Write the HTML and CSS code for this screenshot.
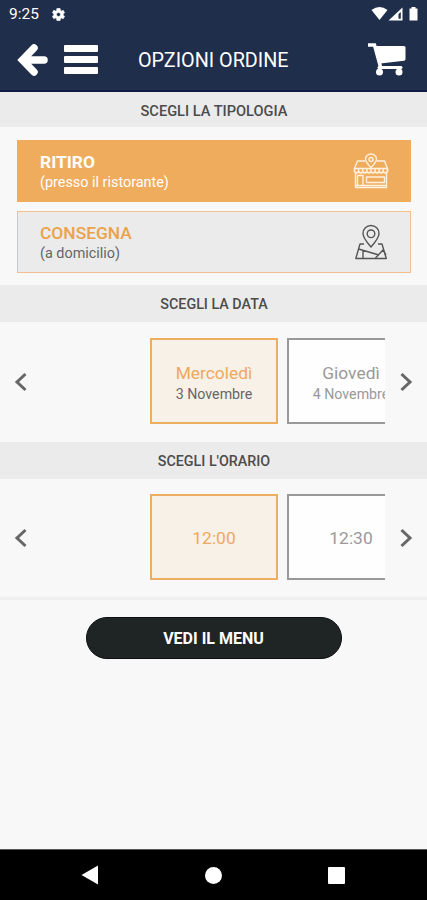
FILE: index.html
```html
<!DOCTYPE html>
<html lang="it">
<head>
  <meta charset="UTF-8">
  <meta name="viewport" content="width=device-width, initial-scale=1.0">
  <title>Opzioni ordine</title>
  <link rel="stylesheet" href="styles.css">
</head>
<body>
  <div id="app">
    <div class="status-bar">
      <span class="clock">9:25</span>
      <svg class="gear" width="15" height="15" viewBox="0 0 24 24" fill="#fff"><path fill-rule="evenodd" stroke="#fff" d="M19.4 13a7.500 7.500 0 0 0 0-2l2.300-1.800-2.200-3.900-2.800 1.100a8 8 0 0 0-1.700-1L14.600 2.400H9.400L9 5.400a8 8 0 0 0-1.700 1L4.500 5.300 2.300 9.200 4.600 11a7.500 7.500 0 0 0 0 2l-2.300 1.800 2.200 3.900 2.800-1.100a8 8 0 0 0 1.700 1l.4 3h5.200l.4-3a8 8 0 0 0 1.700-1l2.800 1.100 2.200-3.900zM12 15.300a3.300 3.300 0 1 1 0-6.600 3.300 3.300 0 0 1 0 6.600z"/></svg>
      <svg class="signals" width="50" height="16" viewBox="0 0 50 16" fill="#fff">
        <path d="M0.500 4Q8.500-2 16.500 4L8.500 14z"/>
        <path fill-rule="evenodd" d="M17.500 14.500L31.500 1.500V14.500zM27.500 8v4.800h2.300V6z"/>
        <path d="M38.500 2.500h2V1h4v1.500h2V14.500h-8z"/>
      </svg>
    </div>

    <header>
      <svg class="back" width="31" height="34" viewBox="0 0 31 34"><path d="M17 5L5.500 17 17 29M7 17h20" fill="none" stroke="#fff" stroke-width="7.500" stroke-linecap="round" stroke-linejoin="miter"/></svg>
      <div class="hamburger"><i></i><i></i><i></i></div>
      <h1>OPZIONI ORDINE</h1>
      <svg class="cart" width="38" height="33" viewBox="0 0 38 33">
        <path d="M0 2h6.500l6 22" fill="none" stroke="#fff" stroke-width="3.500"/>
        <path d="M8 3h28q1.500 0 1.500 1.500V16q0 1.500-1.500 1.700L12.500 20.500z" fill="#fff"/>
        <path d="M11 24.500h22" stroke="#fff" stroke-width="3" stroke-linecap="round"/>
        <circle cx="11.500" cy="29" r="3.500" fill="#fff"/>
        <circle cx="31" cy="29" r="3.500" fill="#fff"/>
      </svg>
    </header>

    <main>
      <h2 class="first">SCEGLI LA TIPOLOGIA</h2>
      <div class="types">
        <div class="type active">
          <div>
            <strong>RITIRO</strong>
            <span>(presso il ristorante)</span>
          </div>
          <!-- negozio -->
          <svg width="36" height="36" viewBox="0 0 36 36" fill="none" stroke="#fff0df" stroke-width="1.400" stroke-linejoin="round">
            <path d="M12 8H4.500L1.500 15.500h33L31.500 8H24"/>
            <path d="M1.500 15.500v3q2.050 3 4.100 0 2.050 3 4.100 0 2.050 3 4.100 0 2.050 3 4.100 0 2.050 3 4.100 0 2.050 3 4.100 0 2.050 3 4.100 0 2.050 3 4.300 0v-3" stroke-width="1.700"/>
            <path d="M5.600 15.500v3M9.700 15.500v3M13.800 15.500v3M18 15.500v3M22.100 15.500v3M26.200 15.500v3M30.300 15.500v3"/>
            <path d="M2.500 20v14.500h31V20M2 32.500h32M4.500 32V22.500h5.500V32M13.500 24h18v5.500h-18z"/>
            <path d="M18 14.500Q12.500 9 12.500 6a5.500 5 0 0 1 11 0Q23.500 9 18 14.500z" fill="#efac5d"/>
            <circle cx="18" cy="6.500" r="2"/>
          </svg>
        </div>
        <div class="type">
          <div>
            <strong>CONSEGNA</strong>
            <span>(a domicilio)</span>
          </div>
          <!-- mappa con segnaposto -->
          <svg width="36" height="36" viewBox="0 0 36 36" fill="none" stroke="#555" stroke-width="1.400" stroke-linejoin="round">
            <path d="M11 20H7L2.800 34.500h30.500L29 20h-4"/>
            <path d="M5.500 25l20.500 6M10 26.300V34M33 31l-3-5L22.500 34"/>
            <path d="M18 23Q10 14 10 9.500a8 8 0 0 1 16 0Q26 14 18 23z"/>
            <circle cx="18" cy="9.800" r="3.800"/>
          </svg>
        </div>
      </div>

      <h2>SCEGLI LA DATA</h2>
      <div class="carousel">
        <svg class="prev" width="14" height="20" viewBox="0 0 14 20"><path d="M11.500 2L3 10l8.500 8"/></svg>
        <div class="track">
          <div class="card selected"><b>Mercoledì</b><span>3 Novembre</span></div>
          <div class="card"><b>Giovedì</b><span>4 Novembre</span></div>
        </div>
        <svg class="next" width="14" height="20" viewBox="0 0 14 20"><path d="M2.500 2L11 10l-8.500 8"/></svg>
      </div>

      <h2>SCEGLI L'ORARIO</h2>
      <div class="carousel hours">
        <svg class="prev" width="14" height="20" viewBox="0 0 14 20"><path d="M11.500 2L3 10l8.500 8"/></svg>
        <div class="track">
          <div class="card selected"><b>12:00</b></div>
          <div class="card"><b>12:30</b></div>
        </div>
        <svg class="next" width="14" height="20" viewBox="0 0 14 20"><path d="M2.500 2L11 10l-8.500 8"/></svg>
      </div>

      <button class="menu-button">VEDI IL MENU</button>
    </main>

    <nav>
      <svg width="18" height="20" viewBox="0 0 18 20" fill="#fff"><path d="M0.500 10L17 0.500v19z"/></svg>
      <i class="home"></i>
      <i class="recent"></i>
    </nav>
  </div>
</body>
</html>
```
FILE: styles.css
```css
* {
  box-sizing: border-box;
}
body {
  margin: 0;
  font-family: Roboto, "Liberation Sans", sans-serif;
  background-color: #f8f8f8;
}
#app {
  display: flex;
  flex-direction: column;
  height: 900px;
  overflow: hidden;
}
svg {
  display: block;
  flex-shrink: 0;
}
.status-bar {
  display: flex;
  align-items: center;
  height: 28px;
  padding: 0 6px 0 9px;
  background-color: #1f2e4b;
  color: #fff;
}
.clock {
  width: 42px;
  font-size: 15.5px;
}
.signals {
  margin-left: auto;
}
header {
  display: flex;
  align-items: center;
  height: 64px;
  padding: 1px 21px 0 17px;
  background-color: #1f2e4b;
  border-bottom: 2px solid #101b46;
  color: #fff;
}
.hamburger {
  display: flex;
  flex-direction: column;
  gap: 4px;
  width: 34px;
  margin-left: 16px;
}
.hamburger i {
  height: 7px;
  border-radius: 1px;
  background-color: #fff;
}
h1 {
  margin: 2px 0 0 40px;
  font-size: 19.8px;
  font-weight: 400;
  white-space: nowrap;
}
.cart {
  margin-left: auto;
}
main {
  flex: 1;
}
h2 {
  height: 37px;
  margin: 0;
  background-color: #ebebeb;
  color: #4c4c4c;
  font-size: 14.3px;
  font-weight: 500;
  line-height: 39px;
  text-align: center;
  text-indent: 1px;
}
h2.first {
  height: 35px;
  font-size: 14.6px;
  line-height: 38px;
}
.types {
  display: flex;
  flex-direction: column;
  gap: 9px;
  padding: 13px 16px 12px 17px;
}
.type {
  display: flex;
  align-items: center;
  justify-content: space-between;
  height: 62px;
  padding: 0 21px 0 22px;
  border: 1px solid #f1bf91;
  background-color: #ebebeb;
  color: #666;
}
.type.active {
  border-color: #efac5d;
  background-color: #efac5d;
  color: #fff;
}
.type strong {
  display: block;
  padding-top: 2px;
  color: #eaa34c;
  font-size: 17.4px;
  font-weight: 500;
  line-height: 22px;
}
.type.active strong {
  color: #fff;
  font-weight: 700;
}
.type span {
  display: block;
  font-size: 14.4px;
  line-height: 20px;
}
.carousel {
  display: flex;
  align-items: center;
  height: 120px;
  padding: 0 14px 2px;
}
.carousel > svg {
  margin-top: 1px;
  fill: none;
  stroke: #666;
  stroke-width: 3;
}
.track {
  display: flex;
  gap: 9px;
  width: 235px;
  margin-left: 122px;
  overflow: hidden;
}
.carousel > .next {
  margin-left: auto;
}
.card {
  display: flex;
  flex-direction: column;
  align-items: center;
  justify-content: center;
  flex: 0 0 128px;
  height: 86px;
  padding-top: 3px;
  border: 2px solid #999;
  background-color: #fefefe;
  color: #999;
}
.card.selected {
  border-color: #ecaf62;
  background-color: #f7f1e7;
  color: #666;
}
.card b {
  font-size: 17.4px;
  font-weight: 400;
  line-height: 22px;
}
.card.selected b {
  color: #f0a860;
}
.card span {
  font-size: 14.2px;
  line-height: 20px;
}
.hours {
  height: 121px;
  padding-bottom: 3px;
  border-bottom: 3px solid #efefef;
}
.hours > svg {
  margin-top: 2px;
}
.menu-button {
  display: block;
  width: 256px;
  height: 42px;
  margin: 17px auto 0;
  padding: 0;
  border: 1px solid #0c0f10;
  border-radius: 21px;
  background-color: #1f2425;
  color: #fff;
  font-family: inherit;
  font-size: 16px;
  font-weight: 700;
}
nav {
  display: flex;
  align-items: center;
  justify-content: space-between;
  height: 51px;
  padding: 0 82px 0 81px;
  border-top: 1px solid #555;
  background-color: #000;
}
.home {
  width: 17px;
  height: 17px;
  border-radius: 50%;
  background-color: #fff;
}
.recent {
  width: 17px;
  height: 17px;
  border-radius: 1px;
  background-color: #fff;
}
```
